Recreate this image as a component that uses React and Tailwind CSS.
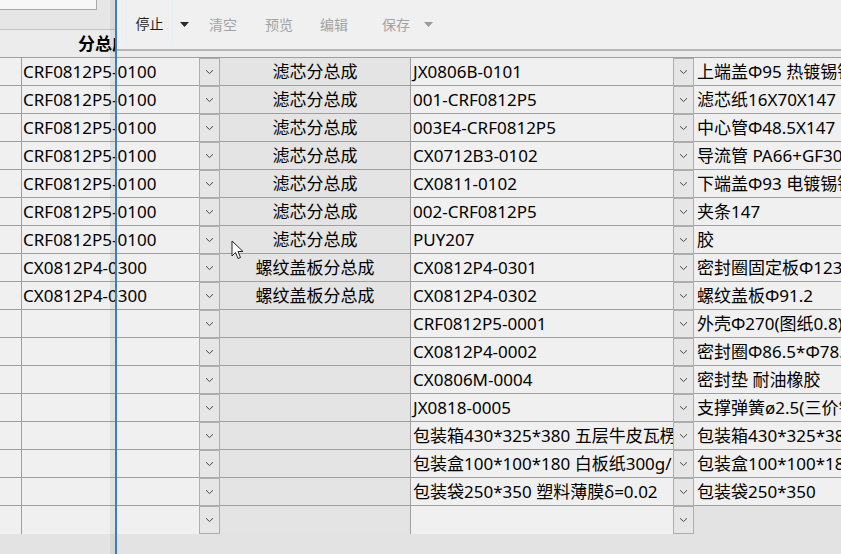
import React from 'react';

const ROWS = [
  { b: 'CRF0812P5-0100', c: '滤芯分总成', d: 'JX0806B-0101', e: '上端盖Φ95 热镀锡钢板' },
  { b: 'CRF0812P5-0100', c: '滤芯分总成', d: '001-CRF0812P5', e: '滤芯纸16X70X147' },
  { b: 'CRF0812P5-0100', c: '滤芯分总成', d: '003E4-CRF0812P5', e: '中心管Φ48.5X147' },
  { b: 'CRF0812P5-0100', c: '滤芯分总成', d: 'CX0712B3-0102', e: '导流管 PA66+GF30' },
  { b: 'CRF0812P5-0100', c: '滤芯分总成', d: 'CX0811-0102', e: '下端盖Φ93 电镀锡钢板' },
  { b: 'CRF0812P5-0100', c: '滤芯分总成', d: '002-CRF0812P5', e: '夹条147' },
  { b: 'CRF0812P5-0100', c: '滤芯分总成', d: 'PUY207', e: '胶' },
  { b: 'CX0812P4-0300', c: '螺纹盖板分总成', d: 'CX0812P4-0301', e: '密封圈固定板Φ123' },
  { b: 'CX0812P4-0300', c: '螺纹盖板分总成', d: 'CX0812P4-0302', e: '螺纹盖板Φ91.2' },
  { b: '', c: '', d: 'CRF0812P5-0001', e: '外壳Φ270(图纸0.8)' },
  { b: '', c: '', d: 'CX0812P4-0002', e: '密封圈Φ86.5*Φ78.5' },
  { b: '', c: '', d: 'CX0806M-0004', e: '密封垫 耐油橡胶' },
  { b: '', c: '', d: 'JX0818-0005', e: '支撑弹簧ø2.5(三价锌)' },
  { b: '', c: '', d: '包装箱430*325*380 五层牛皮瓦楞纸', e: '包装箱430*325*380' },
  { b: '', c: '', d: '包装盒100*100*180 白板纸300g/', e: '包装盒100*100*180' },
  { b: '', c: '', d: '包装袋250*350 塑料薄膜δ=0.02', e: '包装袋250*350' },
  { b: '', c: '', d: '', e: null },
];

const font = { fontFamily: '"Noto Sans", "Noto Sans CJK SC", sans-serif' };

function DropBtn() {
  return (
    <div className="w-[21px] h-full shrink-0 bg-[#e6e6e6] border border-[#adadad] flex items-center justify-center">
      <svg width="9" height="6" viewBox="0 0 9 6">
        <path d="M1 1.2 L4.5 4.6 L8 1.2" fill="none" stroke="#4a4a4a" strokeWidth="1" />
      </svg>
    </div>
  );
}

function Row({ row, last }) {
  const line = last ? '' : 'border-b border-[#9f9f9f]';
  return (
    <div className="flex h-[28px] text-[17px] leading-none text-black">
      <div className={`w-[22px] shrink-0 bg-[#f0f0f0] border-r border-[#9f9f9f] ${line}`} />
      <div className={`w-[177px] shrink-0 bg-[#f0f0f0] pl-[1px] flex items-center overflow-hidden whitespace-nowrap ${line}`}>
        {row.b}
      </div>
      <DropBtn />
      <div className={`w-[190px] shrink-0 bg-[#e4e4e4] flex items-center justify-center whitespace-nowrap ${line}`}>
        {row.c}
      </div>
      <div className={`w-[263px] shrink-0 bg-[#f0f0f0] border-l border-[#9f9f9f] pl-[2px] flex items-center overflow-hidden whitespace-nowrap ${line}`}>
        {row.d}
      </div>
      <DropBtn />
      {row.e !== null ? (
        <div className={`flex-1 bg-[#f0f0f0] pl-[3px] flex items-center overflow-hidden whitespace-nowrap ${line}`}>
          {row.e}
        </div>
      ) : (
        <div className="flex-1" />
      )}
    </div>
  );
}

export default function App() {
  return (
    <div className="relative w-[841px] h-[554px] overflow-hidden bg-[#e3e3e3]" style={font}>
      {/* underlying window */}
      <div className="h-[30px] bg-[#e6e6e6] border-b border-[#c4c4c4]">
        <div className="w-[97px] h-[10px] bg-[#f7f7f7] border-r border-b border-[#a8a8a8]" />
      </div>
      <div className="flex h-[28px] bg-[#ececec] border-b border-[#9f9f9f]">
        <div className="w-[116px] shrink-0 pl-[78px] pt-[1px] flex items-center overflow-hidden text-[17px] font-bold text-black whitespace-nowrap">
          分总成编码
        </div>
      </div>
      {ROWS.map((row, i) => (
        <Row key={i} row={row} last={i === ROWS.length - 1} />
      ))}

      {/* overlay window edge */}
      <div className="absolute top-0 left-[110px] w-[5px] h-full bg-black/[0.06]" />
      <div className="absolute top-0 left-[115px] w-[2px] h-full bg-[#3a7ec6]" />

      {/* floating toolbar */}
      <div className="absolute top-0 left-[117px] w-[724px] h-[51px] bg-[#f0f0f0] border-b-2 border-[#b4b4b4] flex items-center text-[14px]">
        <div className="ml-[9px] w-[47px] h-[46px] self-start border-x border-[#e2f0f4] flex items-center justify-center text-[#1e1e1e]">
          停止
        </div>
        <svg className="ml-[7px]" width="9" height="5" viewBox="0 0 9 5">
          <path d="M0 0 H9 L4.5 5 Z" fill="#2a2a2a" />
        </svg>
        <span className="ml-[20px] text-[#a3a3a3]">清空</span>
        <span className="ml-[28px] text-[#a3a3a3]">预览</span>
        <span className="ml-[27px] text-[#a3a3a3]">编辑</span>
        <span className="ml-[34px] text-[#a3a3a3]">保存</span>
        <svg className="ml-[14px]" width="9" height="5" viewBox="0 0 9 5">
          <path d="M0 0 H9 L4.5 5 Z" fill="#9a9a9a" />
        </svg>
      </div>

      {/* mouse pointer */}
      <svg className="absolute left-[231px] top-[240px]" width="14" height="21" viewBox="0 0 14 21">
        <path d="M1 1 L1 16 L4.5 12.5 L7 18.5 L9.5 17.5 L7 11.5 L12 11.5 Z" fill="#ffffff" stroke="#222" strokeWidth="1" strokeLinejoin="round" />
      </svg>
    </div>
  );
}
